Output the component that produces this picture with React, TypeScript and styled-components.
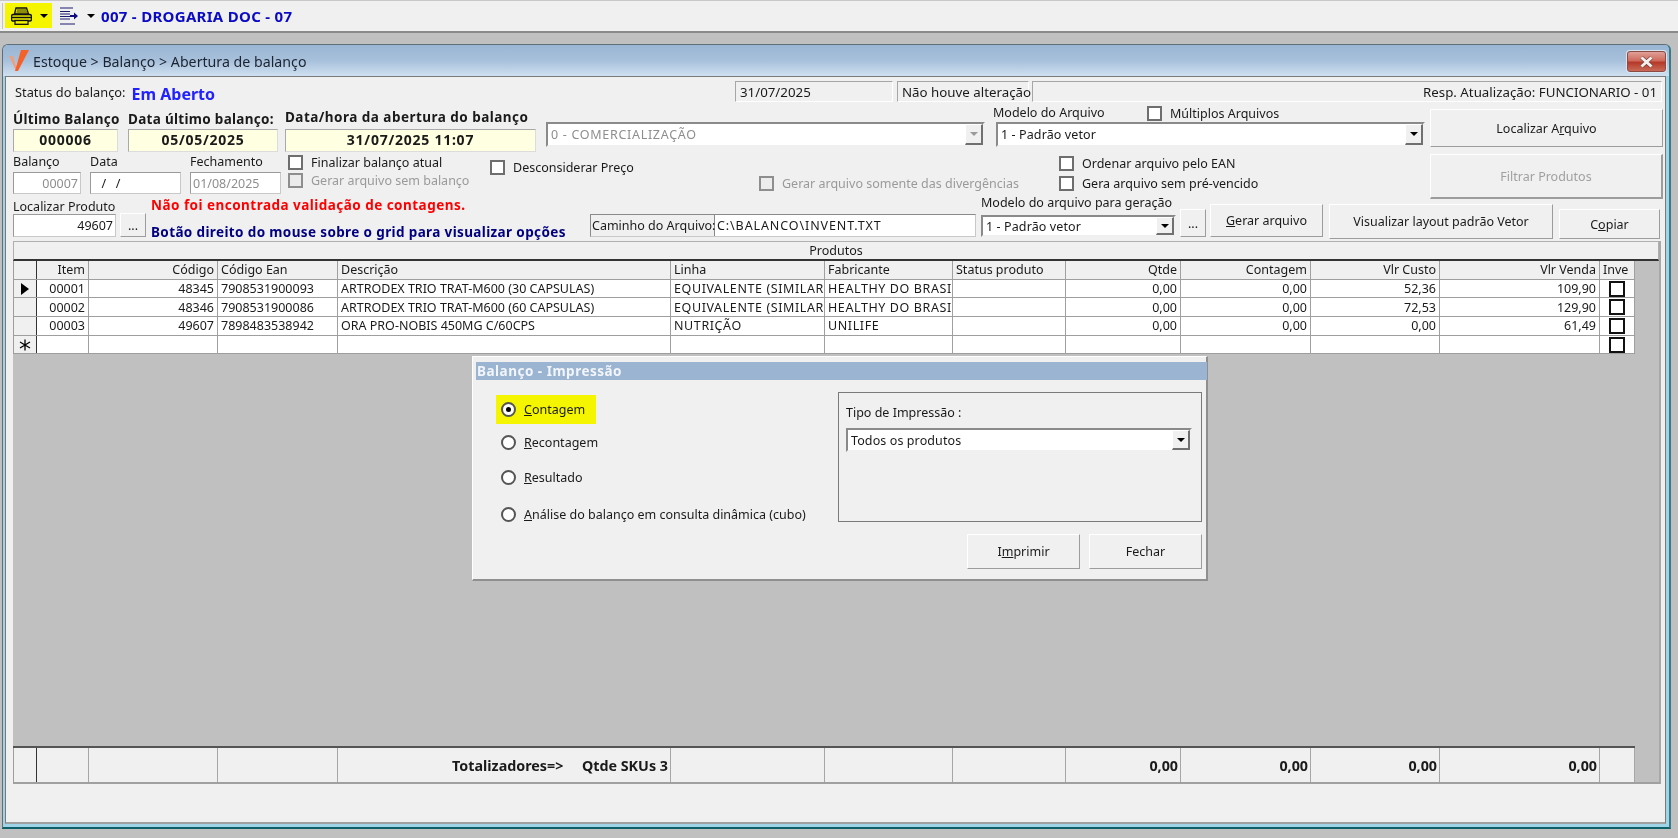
import React from 'react';
import styled, { createGlobalStyle } from 'styled-components';

const Global = createGlobalStyle`
  html, body { margin: 0; padding: 0; height: 100%; overflow: hidden; background: #c0c0c0; }
  body, button, input { font-family: "Noto Sans", "Liberation Sans", Arial, sans-serif; font-size: 12.5px; color: #1a1a1a; }
  #root { height: 838px; width: 1678px; }
`;

const Page = styled.div`
  height: 838px; width: 1678px; display: flex; flex-direction: column; background: #c0c0c0; filter: blur(0.3px);
`;
const Toolbar = styled.div`
  height: 33px; box-sizing: border-box; flex: none; background: #f0f0f0;
  border-top: 1px solid #c8c8c8; border-bottom: 2px solid #8a8a8a;
  display: flex; align-items: flex-start; padding: 2px 0 0 2px;
`;
const Grip = styled.div`
  width: 1px; height: 26px; background: #c4c4c4; margin-right: 2px;
`;
const Highlight = styled.div`
  width: 47px; height: 25px; background: #f5f500; display: flex; align-items: center; gap: 8px; padding-left: 6px; box-sizing: border-box;
`;
const ToolGroup = styled.div`
  display: flex; align-items: center; height: 25px; margin-left: 8px;
`;
const Caret = styled.span`
  width: 0; height: 0; border-left: 4.5px solid transparent; border-right: 4.5px solid transparent; border-top: 4.5px solid #000; display: block;
  margin: ${p => p.$m || '0'};
`;
const Shop = styled.span`
  font-weight: 700; font-size: 15px; color: #0a0ac4; letter-spacing: 0.3px; margin-left: 6px;
`;
const Window = styled.div`
  flex: none; margin: 11px 0 0 2px; width: 1669px; height: 785px; box-sizing: border-box;
  border: 1px solid #5e6f78; border-bottom: 2px solid #0d5f68; border-right: 2px solid #3a7a88; border-radius: 6px 6px 0 0;
  background: #9fd4e8; padding: 0 3px 3px 2px; display: flex; flex-direction: column;
`;
const TitleBar = styled.div`
  height: 31px; flex: none; margin: 0 -3px 0 -2px; border-radius: 5px 5px 0 0;
  background: linear-gradient(#9ab6d4 0%, #a7c0db 50%, #cfe0f0 100%);
  display: flex; align-items: center; padding: 0 3px 0 6px;
`;
const TitleText = styled.span`
  font-size: 14.2px; color: #1c2430; margin-left: 4px; flex: 1; padding-top: 1px;
`;
const CloseBtn = styled.div`
  width: 39px; height: 21px; box-sizing: border-box; border: 1px solid #8d4a45; border-radius: 3px; margin-top: 2px;
  background: linear-gradient(#dfa097 0%, #cf6a5c 45%, #b53a2a 55%, #c96a58 100%);
  display: flex; align-items: center; justify-content: center; box-shadow: 0 0 0 1px #d8e6f0;
`;
const Body = styled.div`
  flex: 1; background: #f0f0f0; border: 1px solid #7a7a7a; border-bottom: 2px solid #a0a0a0; display: flex; flex-direction: column; position: relative; padding: 4px 3px 0 0; min-height: 0;
`;
const StatusRow = styled.div`
  height: 21px; flex: none; display: flex; align-items: stretch;
`;
const StatusLead = styled.div`
  width: 729px; display: flex; align-items: center; padding-left: 9px; box-sizing: border-box; font-size: 12.8px;
`;
const StatusBlue = styled.span`
  color: #2222ff; font-weight: 700; font-size: 16px; margin-left: 6px; position: relative; top: 2px;
`;
const Panel = styled.div`
  box-sizing: border-box; width: ${p => p.$w ? p.$w + 'px' : 'auto'}; flex: ${p => p.$w ? 'none' : '1'};
  margin-right: ${p => p.$mr ?? 3}px; font-size: 13.3px;
  border-left: 1px solid #a6a6a6; border-top: 1px solid #a6a6a6; border-bottom: 1px solid #fff; border-right: 1px solid #fff;
  display: flex; align-items: center; padding: 0 4px 0 4px; white-space: nowrap; justify-content: ${p => p.$end ? 'flex-end' : 'flex-start'};
`;
const Upper = styled.div`
  flex: none; display: flex; height: 97px; padding-left: 7px;
`;
const UpperLeft = styled.div`
  width: 1417px; flex: none; display: flex; flex-direction: column;
`;
const RowA = styled.div`
  height: 50px; display: flex; flex: none;
`;
const RowB = styled.div`
  height: 47px; display: flex; flex: none;
`;
const UpperRight = styled.div`
  flex: 1; display: flex; flex-direction: column; gap: 7px; padding-top: 7px; margin-right: -1px;
`;
const FieldCol = styled.div`
  width: ${p => p.$w}px; flex: none; margin-left: ${p => p.$ml || 0}px; padding-top: ${p => p.$pt || 0}px; display: flex; flex-direction: column;
`;
const BoldLabel = styled.div`
  font-weight: 700; font-size: 13.5px; letter-spacing: ${p => p.$ls ?? 0.3}px; white-space: nowrap; height: ${p => p.$h}px; line-height: ${p => p.$h}px;
`;
const Label = styled.div`
  white-space: nowrap; flex: none; height: ${p => p.$h}px; line-height: ${p => p.$h}px; margin-bottom: ${p => p.$mb || 0}px; width: ${p => p.$w ? p.$w + 'px' : 'auto'};
`;
const InfoBox = styled.div`
  height: 23px; box-sizing: border-box; background: #ffffe1; border: 1px solid #a9a9a9; border-right-color: #dcdcdc; border-bottom-color: #dcdcdc;
  text-align: center; font-weight: 700; font-size: 14px; letter-spacing: 0.75px; line-height: 19px;
`;
const Combo = styled.div`
  height: ${p => p.$h || 25}px; box-sizing: border-box; background: #fff; border: 2px solid #8a8a8a; border-right-color: #f0f0f0; border-bottom-color: #f0f0f0;
  display: flex; align-items: center; padding-left: 3px; font-size: 12.5px; color: ${p => p.$disabled ? '#8e8e8e' : '#1a1a1a'}; justify-content: space-between;
  letter-spacing: ${p => p.$disabled ? 0.7 : 0.1}px;
`;
const ComboArrow = styled.div`
  width: 18px; height: 100%; box-sizing: border-box; background: #f0f0f0; border: 1px solid #fff; border-right-color: #707070; border-bottom-color: #707070; border-bottom-width: 2px; border-right-width: 2px;
  display: flex; align-items: center; justify-content: center; flex: none;
`;
const ArrowDown = styled.span`
  width: 0; height: 0; border-left: 4px solid transparent; border-right: 4px solid transparent; border-top: 4px solid ${p => p.$disabled ? '#9a9a9a' : '#000'};
`;
const Input = styled.div`
  height: ${p => p.$h || 22}px; box-sizing: border-box; background: #fff; border: 1px solid #9a9a9a; border-right-color: #c8c8c8; border-bottom-color: #c8c8c8;
  padding: 0 2px; display: flex; align-items: center; white-space: nowrap; letter-spacing: ${p => p.$ls || 0}px;
  justify-content: ${p => p.$right ? 'flex-end' : 'flex-start'}; color: ${p => p.$muted ? '#8e8e8e' : '#1a1a1a'};
`;
const CheckRow = styled.label`
  display: flex; align-items: center; height: ${p => p.$h || 18}px; gap: 8px; white-space: nowrap; color: ${p => p.$disabled ? '#9a9a9a' : '#1a1a1a'};
`;
const CheckBox = styled.span`
  width: 15px; height: 15px; box-sizing: border-box; flex: none; background: ${p => p.$disabled ? '#ececec' : '#fff'}; border: 2px solid ${p => p.$disabled ? '#8e8e8e' : '#6e6e6e'};
`;
const Button = styled.div`
  box-sizing: border-box; width: ${p => p.$w ? p.$w + 'px' : '100%'}; height: ${p => p.$h}px; flex: none; margin-left: ${p => p.$ml || 0}px; margin-top: ${p => p.$mt || 0}px;
  background: #f0f0f0; border: 1px solid #fff; border-right: ${p => p.$thick ? 2 : 1}px solid #9c9c9c; border-bottom: ${p => p.$thick ? 2 : 1}px solid #9c9c9c;
  display: flex; align-items: center; justify-content: center; white-space: nowrap; color: ${p => p.$disabled ? '#a0a0a0' : '#1a1a1a'};
  u { text-underline-offset: 1px; }
`;
const Lower = styled.div`
  flex: none; height: 42px; display: flex; padding-left: 7px;
`;
const Messages = styled.div`
  width: 439px; flex: none; margin-left: 5px; display: flex; flex-direction: column;
`;
const Msg = styled.div`
  font-weight: 700; font-size: 13.5px; letter-spacing: ${p => p.$ls}px; white-space: nowrap; color: ${p => p.$c}; height: ${p => p.$h}px; line-height: ${p => p.$h}px; margin-top: ${p => p.$mt || 0}px;
`;
const PathBox = styled.div`
  margin-top: 15px; height: 23px; width: 386px; flex: none; display: flex; box-sizing: border-box; border: 1px solid #8a8a8a; border-right-color: #c8c8c8; border-bottom-color: #c8c8c8; background: #fff;
`;
const PathLabel = styled.div`
  width: 124px; flex: none; background: #f0f0f0; border-right: 1px solid #8a8a8a; display: flex; align-items: center; padding-left: 1px; box-sizing: border-box; white-space: nowrap;
`;
const PathValue = styled.div`
  flex: 1; display: flex; align-items: center; padding-left: 2px; letter-spacing: 0.9px;
`;
const Grid = styled.div`
  flex: none; margin-left: 7px; height: 543px; width: 1648px; box-sizing: border-box; display: flex; flex-direction: column; background: #c0c0c0; border-right: 2px solid #a8a8a8; border-bottom: 2px solid #a0a0a0;
`;
const Caption = styled.div`
  height: 20px; flex: none; box-sizing: border-box; background: #f0f0f0; border: 1px solid #b0b0b0; border-bottom: 2px solid #333; text-align: center; line-height: 17px;
`;
const TableArea = styled.div`
  flex: 1; min-height: 0; position: relative; background: #c0c0c0;
`;
const cols = '24px 52px 129px 120px 333px 154px 128px 113px 115px 130px 129px 160px 35px';
const Row = styled.div`
  display: grid; grid-template-columns: ${cols}; height: 18.7px; box-sizing: border-box; width: 1622px;
  background: ${p => p.$head ? '#f0f0f0' : '#fff'};
  border-bottom: 1px solid #9e9e9e;
`;
const Cell = styled.div`
  border-right: 1px solid #a0a0a0; padding: 0 3px; overflow: hidden; white-space: nowrap; display: flex; align-items: center; box-sizing: border-box;
  justify-content: ${p => p.$right ? 'flex-end' : 'flex-start'}; letter-spacing: ${p => p.$ls || 0}px;
`;
const RowHead = styled.div`
  background: #f0f0f0; border-right: 1px solid #333; border-left: 1px solid #9e9e9e; display: flex; align-items: center; justify-content: center; box-sizing: border-box;
`;
const GridCheck = styled.span`
  width: 16px; height: 16px; box-sizing: border-box; border: 2px solid #111; background: #fff; display: block; margin: 0 auto;
`;
const CheckCell = styled.div`
  border-right: 1px solid #a0a0a0; display: flex; align-items: center; justify-content: center; box-sizing: border-box;
`;
const Footer = styled.div`
  height: 36px; flex: none; display: grid; grid-template-columns: ${cols}; width: 1622px; background: #f0f0f0; border-top: 2px solid #555; box-sizing: border-box; font-weight: 700;
`;
const FootCell = styled.div`
  border-right: 1px solid #a6a6a6; display: flex; align-items: center; justify-content: flex-end; padding-right: 2px; white-space: nowrap; box-sizing: border-box; font-size: 14.3px;
`;
const FootHead = styled(FootCell)`
  border-right-color: #333; border-left: 1px solid #9e9e9e;
`;
const Dialog = styled.div`
  position: absolute; left: 459px; top: 95px; width: 736px; height: 225px; box-sizing: border-box; background: #f0f0f0; border: 1px solid #fff; border-right: 2px solid #8f8f8f; border-bottom: 2px solid #8f8f8f; padding: 5px 0 0 3px; display: flex; flex-direction: column;
`;
const DialogTitle = styled.div`
  height: 18px; flex: none; background: #9ab4d2; color: #f2f5f9; font-weight: 700; font-size: 13.5px; line-height: 18px; padding-left: 1px; margin-right: -1px; letter-spacing: 0.5px;
`;
const DialogBody = styled.div`
  flex: 1; display: flex; min-height: 0;
`;
const RadioCol = styled.div`
  width: 362px; flex: none; padding: 15px 0 0 20px; display: flex; flex-direction: column; box-sizing: border-box;
`;
const RadioRow = styled.div`
  display: flex; align-items: center; gap: 8px; height: ${p => p.$h}px; width: ${p => p.$hl ? '100px' : 'auto'}; box-sizing: border-box; padding-left: 5px; white-space: nowrap;
  background: ${p => p.$hl ? '#f5f500' : 'transparent'}; u { text-underline-offset: 1px; }
`;
const Radio = styled.span`
  width: 15px; height: 15px; border-radius: 50%; box-sizing: border-box; border: 2px solid #555; background: #fff; display: flex; align-items: center; justify-content: center; flex: none;
  &::after { content: ''; width: 5px; height: 5px; border-radius: 50%; background: ${p => p.$on ? '#000' : 'transparent'}; }
`;
const RightCol = styled.div`
  flex: 1; display: flex; flex-direction: column; padding: 12px 4px 0 0;
`;
const GroupBox = styled.div`
  height: 130px; box-sizing: border-box; border: 1px solid #7a7a7a; padding: 12px 9px 0 7px; width: 364px; flex: none;
`;
const ComboGap = styled.div`
  height: 7px;
`;
const Buttons = styled.div`
  display: flex; justify-content: flex-end; gap: 9px; margin-top: 12px; width: 364px;
`;
const ModelHead = styled.div`
  display: flex; align-items: center; height: 18px; margin-left: -3px;
`;

const Printer = () => (
  <svg width="21" height="18" viewBox="0 0 21 18" aria-hidden="true">
    <path d="M5 1 H15.5 L17.5 7 H3.5 Z" fill="#f5f500" stroke="#111" strokeWidth="1.4" />
    <path d="M6 3 H15 M5.5 5 H16" stroke="#111" strokeWidth="0.9" />
    <path d="M2.5 7.5 H18.5 Q20.5 7.5 20.5 9.5 V12.5 Q20.5 14 18.5 14 H2.5 Q0.5 14 0.5 12.5 V9.5 Q0.5 7.5 2.5 7.5Z" fill="#d8d800" stroke="#111" strokeWidth="1.4" />
    <path d="M1 10.5 H20" stroke="#111" strokeWidth="1.3" />
    <rect x="4" y="13.5" width="13" height="3.8" fill="#f5f500" stroke="#111" strokeWidth="1.3" />
  </svg>
);
const ListArrow = () => (
  <svg width="19" height="18" viewBox="0 0 19 18" aria-hidden="true">
    <path d="M0 1 H13 M0 4.5 H10 M0 7 H10 M0 9.5 H10 M0 12 H10 M0 17 H15" stroke="#1a1a70" strokeWidth="1.2" />
    <path d="M10 8 H14 V5.5 L18 9 L14 12.5 V10 H10Z" fill="#0c0c80" />
  </svg>
);
const Logo = () => (
  <svg width="20" height="21" viewBox="0 0 20 21" aria-hidden="true">
    <path d="M0 6 L4 6 L8 19 L7 21 Z" fill="#e9a184" />
    <path d="M12 0 L20 0 L9 21 L6 21 Z" fill="#f4622a" />
  </svg>
);
const CloseX = () => (
  <svg width="15" height="12" viewBox="0 0 15 12" aria-hidden="true">
    <path d="M2.5 1.5 L12.5 10.5 M12.5 1.5 L2.5 10.5" stroke="#6e3a36" strokeWidth="4" />
    <path d="M2.5 1.5 L12.5 10.5 M12.5 1.5 L2.5 10.5" stroke="#f4f0ee" strokeWidth="3" />
  </svg>
);
const RowMark = () => (
  <svg width="8" height="12" viewBox="0 0 8 12" aria-hidden="true"><path d="M0 0 L8 6 L0 12 Z" fill="#000" /></svg>
);
const Star = () => (
  <svg width="12" height="12" viewBox="0 0 12 12" aria-hidden="true">
    <path d="M6 0.5 V11.5 M1 3 L11 9 M11 3 L1 9" stroke="#000" strokeWidth="1.3" />
  </svg>
);

const headers: [string, boolean][] = [
  ['Item', true], ['Código', true], ['Código Ean', false], ['Descrição', false], ['Linha', false], ['Fabricante', false],
  ['Status produto', false], ['Qtde', true], ['Contagem', true], ['Vlr Custo', true], ['Vlr Venda', true], ['Inve', false],
];
const rows = [
  ['00001', '48345', '7908531900093', 'ARTRODEX TRIO TRAT-M600 (30 CAPSULAS)', 'EQUIVALENTE (SIMILAR', 'HEALTHY DO BRASIL', '', '0,00', '0,00', '52,36', '109,90'],
  ['00002', '48346', '7908531900086', 'ARTRODEX TRIO TRAT-M600 (60 CAPSULAS)', 'EQUIVALENTE (SIMILAR', 'HEALTHY DO BRASIL', '', '0,00', '0,00', '72,53', '129,90'],
  ['00003', '49607', '7898483538942', 'ORA PRO-NOBIS 450MG C/60CPS', 'NUTRIÇÃO', 'UNILIFE', '', '0,00', '0,00', '0,00', '61,49'],
  ['', '', '', '', '', '', '', '', '', '', ''],
];
const rightCols = [true, true, false, false, false, false, false, true, true, true, true];

export default function App() {
  return (
    <Page>
      <Global />
      <Toolbar>
        <Grip />
        <Highlight><Printer /><Caret /></Highlight>
        <ToolGroup><ListArrow /><Caret $m="0 0 0 8px" /><Shop>007 - DROGARIA DOC - 07</Shop></ToolGroup>
      </Toolbar>
      <Window>
        <TitleBar><Logo /><TitleText>Estoque &gt; Balanço &gt; Abertura de balanço</TitleText><CloseBtn><CloseX /></CloseBtn></TitleBar>
        <Body>
          <StatusRow>
            <StatusLead>Status do balanço: <StatusBlue>Em Aberto</StatusBlue></StatusLead>
            <Panel $w={158} $mr={4}>31/07/2025</Panel>
            <Panel $w={132}>Não houve alteração</Panel>
            <Panel $end $mr={0}>Resp. Atualização: FUNCIONARIO - 01</Panel>
          </StatusRow>
          <Upper>
            <UpperLeft>
              <RowA>
                <FieldCol $w={105} $pt={7}><BoldLabel $h={20}>Último Balanço</BoldLabel><InfoBox>000006</InfoBox></FieldCol>
                <FieldCol $w={150} $ml={10} $pt={7}><BoldLabel $h={20}>Data último balanço:</BoldLabel><InfoBox>05/05/2025</InfoBox></FieldCol>
                <FieldCol $w={251} $ml={7} $pt={4}><BoldLabel $h={23} $ls={0.47}>Data/hora da abertura do balanço</BoldLabel><InfoBox>31/07/2025 11:07</InfoBox></FieldCol>
                <FieldCol $w={439} $ml={10} $pt={20}><Combo $disabled>0 - COMERCIALIZAÇÃO<ComboArrow><ArrowDown $disabled /></ComboArrow></Combo></FieldCol>
                <FieldCol $w={429} $ml={11} $pt={2}>
                  <ModelHead>
                    <Label $h={18} $w={154}>Modelo do Arquivo</Label>
                    <CheckRow><CheckBox />Múltiplos Arquivos</CheckRow>
                  </ModelHead>
                  <Combo>1 - Padrão vetor<ComboArrow><ArrowDown /></ComboArrow></Combo>
                </FieldCol>
              </RowA>
              <RowB>
                <FieldCol $w={68}><Label $h={20}>Balanço</Label><Input $right $muted>00007</Input></FieldCol>
                <FieldCol $w={91} $ml={9}><Label $h={20}>Data</Label><Input $ls={1}>&nbsp;&nbsp;/&nbsp;&nbsp;/</Input></FieldCol>
                <FieldCol $w={91} $ml={9}><Label $h={20}>Fechamento</Label><Input $muted>01/08/2025</Input></FieldCol>
                <FieldCol $w={195} $ml={7} $pt={1}>
                  <CheckRow><CheckBox />Finalizar balanço atual</CheckRow>
                  <CheckRow $disabled><CheckBox $disabled />Gerar arquivo sem balanço</CheckRow>
                </FieldCol>
                <FieldCol $w={250} $ml={7} $pt={6}><CheckRow><CheckBox />Desconsiderar Preço</CheckRow></FieldCol>
                <FieldCol $w={290} $ml={19} $pt={22}><CheckRow $disabled><CheckBox $disabled />Gerar arquivo somente das divergências</CheckRow></FieldCol>
                <FieldCol $w={300} $ml={10} $pt={1}>
                  <CheckRow $h={20}><CheckBox />Ordenar arquivo pelo EAN</CheckRow>
                  <CheckRow $h={20}><CheckBox />Gera arquivo sem pré-vencido</CheckRow>
                </FieldCol>
              </RowB>
            </UpperLeft>
            <UpperRight>
              <Button $h={38}><span>Localizar A<u>r</u>quivo</span></Button>
              <Button $h={45} $thick $disabled>Filtrar Produtos</Button>
            </UpperRight>
          </Upper>
          <Lower>
            <FieldCol $w={103}><Label $h={15}>Localizar Produto</Label><Input $right $h={23}>49607</Input></FieldCol>
            <Button $w={26} $h={24} $ml={4} $mt={14}>...</Button>
            <Messages>
              <Msg $c="#ff0000" $h={12} $ls={0.47}>Não foi encontrada validação de contagens.</Msg>
              <Msg $c="#000080" $h={18} $mt={12} $ls={0.37}>Botão direito do mouse sobre o grid para visualizar opções</Msg>
            </Messages>
            <PathBox><PathLabel>Caminho do Arquivo:</PathLabel><PathValue>C:\BALANCO\INVENT.TXT</PathValue></PathBox>
            <FieldCol $w={195} $ml={5}>
              <Label $h={8} $mb={8}>Modelo do arquivo para geração</Label>
              <Combo $h={22}>1 - Padrão vetor<ComboArrow><ArrowDown /></ComboArrow></Combo>
            </FieldCol>
            <Button $w={26} $h={28} $ml={4} $mt={10}>...</Button>
            <Button $w={113} $h={33} $ml={4} $mt={5}><span><u>G</u>erar arquivo</span></Button>
            <Button $w={224} $h={35} $ml={6} $mt={5}>Visualizar layout padrão Vetor</Button>
            <Button $w={101} $h={30} $ml={6} $mt={10}><span>C<u>o</u>piar</span></Button>
          </Lower>
          <Grid>
            <Caption>Produtos</Caption>
            <TableArea>
              <Row $head>
                <RowHead />
                {headers.map(([h, r], i) => (
                  <Cell key={i} $right={r}>{h}</Cell>
                ))}
              </Row>
              {rows.map((r, i) => (
                <Row key={i}>
                  <RowHead>{i === 0 ? <RowMark /> : i === 3 ? <Star /> : null}</RowHead>
                  {r.map((c, j) => <Cell key={j} $right={rightCols[j]} $ls={j === 4 || j === 5 ? 0.6 : 0}>{c}</Cell>)}
                  <CheckCell><GridCheck /></CheckCell>
                </Row>
              ))}
              <Dialog>
                <DialogTitle>Balanço - Impressão</DialogTitle>
                <DialogBody>
                  <RadioCol>
                    <RadioRow $hl $h={29}><Radio $on /><span><u>C</u>ontagem</span></RadioRow>
                    <RadioRow $h={36}><Radio /><span><u>R</u>econtagem</span></RadioRow>
                    <RadioRow $h={35}><Radio /><span><u>R</u>esultado</span></RadioRow>
                    <RadioRow $h={38}><Radio /><span><u>A</u>nálise do balanço em consulta dinâmica (cubo)</span></RadioRow>
                  </RadioCol>
                  <RightCol>
                    <GroupBox>
                      <Label $h={16}>Tipo de Impressão :</Label>
                      <ComboGap />
                      <Combo $h={24}>Todos os produtos<ComboArrow><ArrowDown /></ComboArrow></Combo>
                    </GroupBox>
                    <Buttons>
                      <Button $w={113} $h={35}><span>I<u>m</u>primir</span></Button>
                      <Button $w={113} $h={35}>Fechar</Button>
                    </Buttons>
                  </RightCol>
                </DialogBody>
              </Dialog>
            </TableArea>
            <Footer>
              <FootHead />
              <FootCell /><FootCell /><FootCell />
              <FootCell>Totalizadores=&gt;&nbsp;&nbsp;&nbsp;&nbsp;&nbsp;Qtde SKUs 3</FootCell>
              <FootCell /><FootCell /><FootCell />
              <FootCell>0,00</FootCell><FootCell>0,00</FootCell><FootCell>0,00</FootCell><FootCell>0,00</FootCell><FootCell />
            </Footer>
          </Grid>
        </Body>
      </Window>
    </Page>
  );
}
